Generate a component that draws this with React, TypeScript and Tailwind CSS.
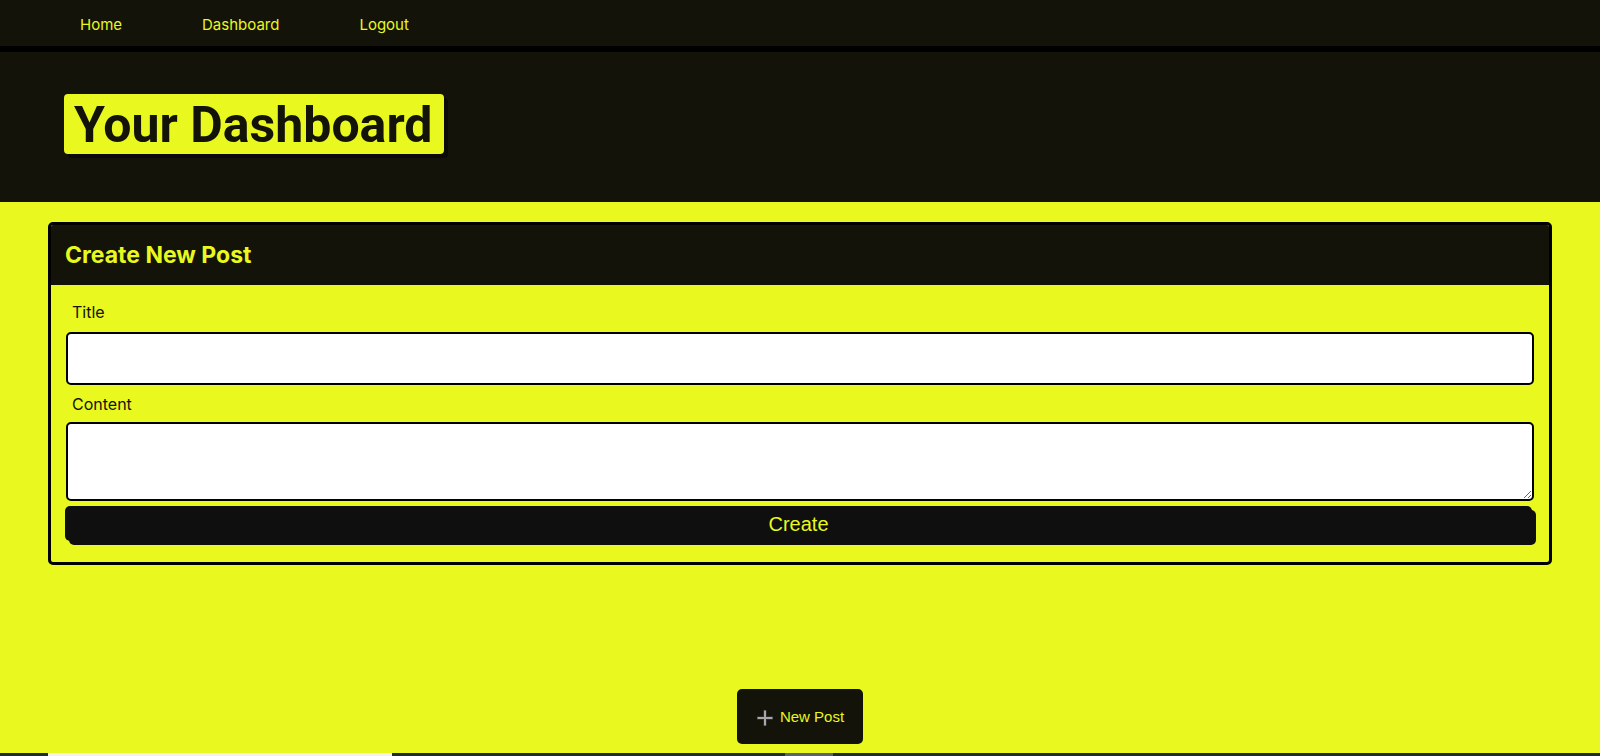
import React from "react";

export default function App() {
  const plex = { fontFamily: "Inter, 'Noto Sans', sans-serif" };
  return (
    <div className="w-[1600px] h-[756px] overflow-hidden bg-[#e9f81e] flex flex-col" style={plex}>
      <nav className="h-[52px] bg-[#13130a] border-b-[6px] border-black flex items-center pl-[40px] shrink-0">
        <a className="px-[40px] text-[15px] text-[#e9f81e] leading-none pt-[2px]">Home</a>
        <a className="px-[40px] text-[15px] text-[#e9f81e] leading-none pt-[2px]">Dashboard</a>
        <a className="px-[40px] text-[15px] text-[#e9f81e] leading-none pt-[2px]">Logout</a>
      </nav>
      <header className="h-[150px] bg-[#13130a] pl-[64px] pt-[42px] shrink-0">
        <h1
          className="inline-flex items-center whitespace-nowrap h-[60px] w-[380px] px-[10px] pt-[2px] bg-[#e9f81e] rounded-[4px] shadow-[4px_4px_0_#0a0a08] text-[#13130a] text-[50px] font-bold leading-none"
          style={{ fontFamily: "Roboto, 'Noto Sans', sans-serif" }}
        >
          Your Dashboard
        </h1>
      </header>
      <main className="px-[48px] pt-[20px]">
        <section className="border-[3px] border-black rounded-[5px] overflow-hidden">
          <div className="h-[60px] bg-[#13130a] flex items-center px-[14px] -mx-[3px] -mt-[3px] pt-[3px] box-content">
            <h2 className="pl-[3px] text-[23px] font-bold text-[#e9f81e] leading-none">Create New Post</h2>
          </div>
          <form className="px-[15px] pt-[15px] pb-[21px] flex flex-col">
            <label className="pl-[6px] text-[16px] leading-[24px] text-[#13130a]">Title</label>
            <input className="mt-[8px] h-[53px] bg-white border-2 border-black rounded-[5px] outline-none" />
            <label className="mt-[7px] pl-[6px] text-[16px] leading-[24px] text-[#13130a]">Content</label>
            <textarea className="mt-[6px] h-[79px] bg-white border-2 border-black rounded-[5px] outline-none" />
            <button
              type="button"
              className="mt-[5px] h-[35px] mr-[2px] -ml-[1px] bg-[#0f0f0f] rounded-[5px] shadow-[4px_4px_0_#0f0f0f] text-[#e9f81e] text-[20px] leading-none"
              style={{ fontFamily: "'Liberation Sans', Arial, sans-serif" }}
            >
              Create
            </button>
          </form>
        </section>
      </main>
      <div className="flex-1" />
      <div className="flex justify-center shrink-0">
        <button
          type="button"
          className="w-[126px] h-[55px] bg-[#13130a] rounded-[5px] flex items-center justify-center gap-[6px] pt-[2px] text-[#e9f81e] text-[15px]"
          style={{ fontFamily: "'Liberation Sans', Arial, sans-serif" }}
        >
          <svg width="18" height="18" viewBox="0 0 18 18">
            <path d="M9 1v16M1 9h16" stroke="#2a2a2a" strokeWidth="4" />
            <path d="M9 1.5v15M1.5 9h15" stroke="#a8a8a8" strokeWidth="2" />
          </svg>
          New Post
        </button>
      </div>
      <div className="mt-[9px] h-[3px] bg-[#1e2c30] flex shrink-0">
        <div className="ml-[48px] w-[344px] bg-[#f2f2f2]" />
        <div className="ml-[393px] w-[48px] bg-[#5a6468]" />
      </div>
    </div>
  );
}
